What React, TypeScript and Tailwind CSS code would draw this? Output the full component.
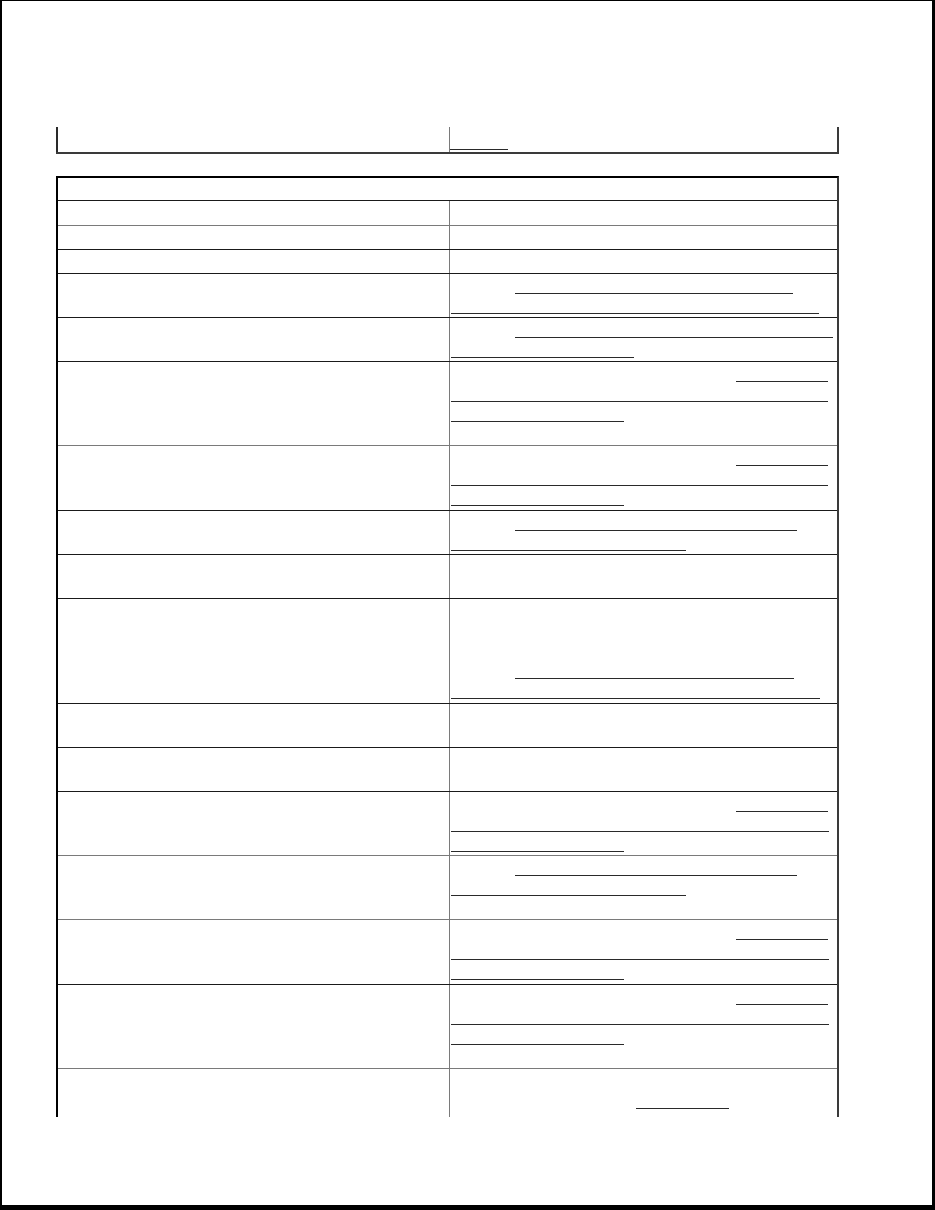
type Seg = [number, number];
type Row = {
  lines: (Seg[] | null)[];
  extra?: number;
  border?: string;
};

// right cell content starts at x=451 on the page
const X0 = 451;

const rows: Row[] = [
  { lines: [null], extra: 1, border: "border-[#1a1a1a]" },
  { lines: [null], border: "border-[#7a7a7a]" },
  { lines: [null], border: "border-[#1a1a1a]" },
  { lines: [[[515, 793]], [[451, 819]]], border: "border-[#1a1a1a]" },
  { lines: [[[515, 833]], [[451, 634]]], border: "border-[#1a1a1a]" },
  { lines: [[[736, 828]], [[451, 828]], [[451, 624]], null], border: "border-[#1a1a1a]" },
  { lines: [[[736, 828]], [[451, 828]], [[451, 624]]], extra: 1, border: "border-[#7a7a7a]" },
  { lines: [[[515, 797]], [[451, 686]]], border: "border-[#1a1a1a]" },
  { lines: [null, null], border: "border-[#1a1a1a]" },
  { lines: [null, null, null, [[515, 794]], [[451, 820]]], extra: 1, border: "border-[#1a1a1a]" },
  { lines: [null, null], border: "border-[#1a1a1a]" },
  { lines: [null, null], border: "border-[#1a1a1a]" },
  { lines: [[[736, 828]], [[451, 829]], [[451, 624]]], border: "border-[#1a1a1a]" },
  { lines: [[[515, 797]], [[451, 686]], null], border: "border-[#7a7a7a]" },
  { lines: [[[736, 828]], [[451, 829]], [[451, 624]]], extra: 1, border: "border-[#7a7a7a]" },
  { lines: [[[736, 828]], [[451, 829]], [[451, 624]], null], border: "border-[#1a1a1a]" },
];

function Line({ segs }: { segs: Seg[] | null }) {
  let cursor = X0;
  return (
    <div className="flex h-[20px] items-end">
      {segs?.map(([a, b]) => {
        const ml = a - cursor;
        cursor = b;
        return (
          <span
            key={a}
            className="block h-[1px] bg-[#2a2a2a] mb-[1px]"
            style={{ marginLeft: ml, width: b - a }}
          />
        );
      })}
    </div>
  );
}

function TableRow({ row }: { row: Row }) {
  return (
    <div className={`flex border-t ${row.border ?? "border-[#1a1a1a]"}`}>
      <div className="w-[391px] shrink-0" />
      <div
        className="flex-1 border-l border-[#7a7a7a] pl-[1px] pt-[1px] pb-[2px]"
        style={{ paddingBottom: 2 + (row.extra ?? 0) }}
      >
        {row.lines.map((l, i) => (
          <Line key={i} segs={l} />
        ))}
      </div>
    </div>
  );
}

export default function App() {
  return (
    <div className="w-[935px] h-[1210px] bg-white box-border border-t border-l-2 border-r-[3px] border-b-[5px] border-black overflow-hidden">
      <div className="pt-[126px] pl-[54px]">
        {/* tail of the previous table */}
        <div className="flex w-[783px] h-[27px] border-b-2 border-[#3a3a3a]">
          <div className="w-[393px] shrink-0 border-l-2 border-[#2a2a2a]" />
          <div className="flex-1 border-l border-[#7a7a7a] border-r-2 border-r-[#3a3a3a] flex flex-col justify-end pb-[2px]">
            <span className="block h-[1px] w-[58px] bg-[#2a2a2a]" />
          </div>
        </div>

        {/* second table */}
        <div className="mt-[22px] w-[783px] h-[941px] border-t-2 border-black border-l-2 border-l-black border-r-2 border-r-[#3a3a3a] overflow-hidden">
          <div className="h-[22px]" />
          {rows.map((r, i) => (
            <TableRow key={i} row={r} />
          ))}
          <div className="flex border-t border-[#7a7a7a] h-[60px]">
            <div className="w-[391px] shrink-0" />
            <div className="flex-1 border-l border-[#7a7a7a] pl-[1px] pt-[1px]">
              <Line segs={null} />
              <Line segs={[[636, 729]]} />
            </div>
          </div>
        </div>
      </div>
    </div>
  );
}
